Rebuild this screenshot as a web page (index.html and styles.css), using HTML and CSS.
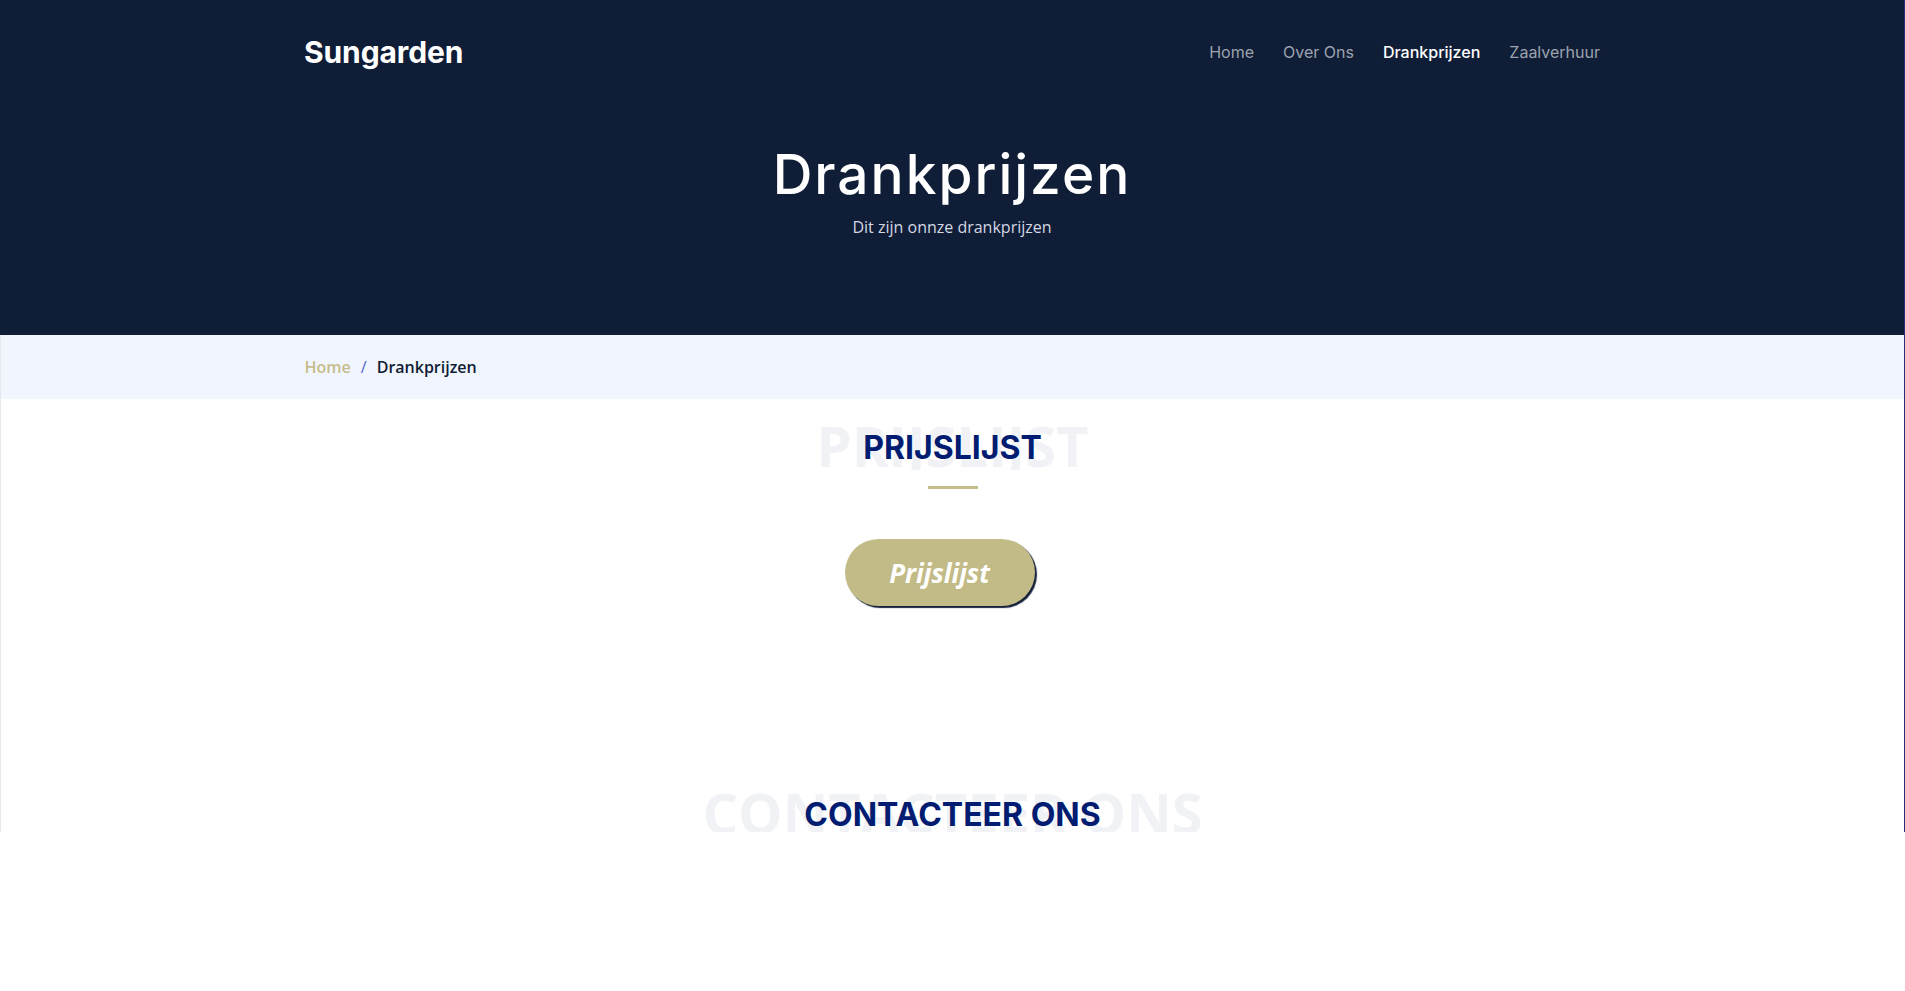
FILE: index.html
```
<!DOCTYPE html>
<html lang="nl">
<head>
<meta charset="utf-8">
<title>Drankprijzen - Sungarden</title>
<link rel="stylesheet" href="styles.css">
</head>
<body>
<div class="page">
  <header class="hero">
    <nav class="navbar container">
      <a class="brand" href="#">Sungarden</a>
      <ul class="nav">
        <li><a class="nav-link" href="#">Home</a></li>
        <li><a class="nav-link" href="#">Over Ons</a></li>
        <li><a class="nav-link active" href="#">Drankprijzen</a></li>
        <li><a class="nav-link" href="#">Zaalverhuur</a></li>
      </ul>
    </nav>
    <div class="hero-text">
      <h1 class="hero-title">Drankprijzen</h1>
      <p class="hero-sub">Dit zijn onnze drankprijzen</p>
    </div>
  </header>
  <div class="below">
    <div class="breadcrumbs">
      <ol class="crumbs container">
        <li><a class="crumb-home" href="#">Home</a></li>
        <li class="crumb-sep">/</li>
        <li class="crumb-current">Drankprijzen</li>
      </ol>
    </div>
    <section class="section">
      <div class="section-title">
        <span class="title-bg" aria-hidden="true">PRIJSLIJST</span>
        <h2 class="title-fg">PRIJSLIJST</h2>
      </div>
      <div class="title-line"></div>
      <div class="btn-row">
        <a class="btn-price" href="#">Prijslijst</a>
      </div>
    </section>
    <section class="section section-contact">
      <div class="section-title">
        <span class="title-bg" aria-hidden="true">CONTACTEER ONS</span>
        <h2 class="title-fg">CONTACTEER ONS</h2>
      </div>
    </section>
  </div>
</div>
</body>
</html>
```
FILE: styles.css
```
* { box-sizing: border-box; }
html, body { margin: 0; padding: 0; background: #ffffff; }
body { font-family: "Open Sans", "Noto Sans", sans-serif; color: #0f1d36; }
a { text-decoration: none; }

.page {
  width: 1905px;
  height: 832px;
  overflow: hidden;
  border-right: 1px solid #2b2f78;
}

.container {
  width: 1296px;
  margin: 0 auto;
}

.hero {
  background: #0f1d36;
  height: 335px;
}

.navbar {
  height: 104px;
  display: flex;
  align-items: center;
  justify-content: space-between;
}

.brand {
  font-family: "Inter", sans-serif;
  font-weight: 700;
  font-size: 30px;
  color: #ffffff;
  letter-spacing: -0.1px;
}

.nav {
  display: flex;
  gap: 29px;
  list-style: none;
  margin: 0;
  padding: 0;
}

.nav-link {
  font-family: "Inter", sans-serif;
  font-size: 16px;
  font-weight: 400;
  color: #9ca3af;
}

.nav-link.active { color: #ffffff; font-weight: 500; }

.hero-text {
  text-align: center;
  padding-top: 37px;
}

.hero-title {
  margin: 0;
  font-family: "Inter", sans-serif;
  font-weight: 500;
  font-size: 55px;
  line-height: 1.2;
  color: #ffffff;
  letter-spacing: 2px;
}

.hero-sub {
  margin: 8px 0 0;
  font-size: 16px;
  line-height: 24px;
  color: #d3d8e2;
}

.below {
  border-left: 1px solid #e6e8ec;
}

.breadcrumbs {
  background: #f1f5fd;
  height: 64px;
  display: flex;
  align-items: center;
}

.crumbs {
  display: flex;
  align-items: center;
  list-style: none;
  padding: 0;
  font-size: 16px;
  font-weight: 600;
}

.crumb-home { color: #c6bd8c; }
.crumb-sep { color: #5063cf; margin: 0 10px; font-weight: 500; }
.crumb-current { color: #0f1d36; }

.section {
  text-align: center;
  padding-top: 18px;
}

.section-title {
  position: relative;
  overflow: hidden;
  padding: 12px 0 3px;
}

.title-bg {
  position: absolute;
  top: 0;
  left: 0;
  right: 0;
  font-family: "Open Sans", sans-serif;
  font-weight: 700;
  font-size: 56px;
  line-height: 56px;
  color: #f1f2f5;
  white-space: nowrap;
}

.title-fg {
  position: relative;
  margin: 0;
  font-family: "Inter", sans-serif;
  font-weight: 700;
  font-size: 32px;
  line-height: 1.2;
  color: #011c70;
}

.title-line {
  width: 50px;
  height: 3px;
  background: #c6bd8c;
  margin: 16px auto 0;
}

.btn-row {
  display: flex;
  justify-content: center;
  padding-top: 50px;
  padding-right: 26px;
}

.btn-price {
  width: 190px;
  height: 67px;
  border-radius: 34px;
  background: #c3bb87;
  color: #ffffff;
  font-family: "Open Sans", sans-serif;
  font-weight: 700;
  font-style: italic;
  font-size: 26px;
  display: inline-flex;
  align-items: center;
  justify-content: center;
  box-shadow: 2px 2px 1px #16213b;
}

.section-contact {
  padding-top: 178px;
}
```
